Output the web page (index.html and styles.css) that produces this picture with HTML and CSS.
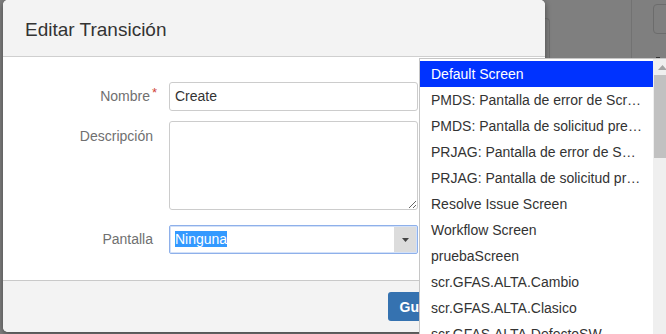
FILE: index.html
```html
<!DOCTYPE html>
<html lang="es">
<head>
<meta charset="utf-8">
<title>Editar Transición</title>
<link rel="stylesheet" href="styles.css">
</head>
<body>
<div class="bgpage">
  <div class="bg-panel"></div>
  <div class="bg-divider"></div>
  <div class="bg-btn"></div>
  <div class="bg-dash"></div>
</div>
<div class="page">
  <div class="modal">
    <div class="modal-header"><h2 class="title">Editar Transición</h2></div>
    <div class="modal-body">
      <div class="row row-name">
        <div class="label label-req"><span class="label-text">Nombre<span class="req">*</span></span></div>
        <div class="field text-field">Create</div>
      </div>
      <div class="row row-desc">
        <div class="label label-top">Descripción</div>
        <textarea class="field textarea"></textarea>
      </div>
      <div class="row row-screen">
        <div class="label">Pantalla</div>
        <div class="field select-field">
          <div class="select-value"><span class="sel-text">Ninguna</span></div>
          <div class="select-arrow">
            <svg width="7" height="4" viewBox="0 0 7 4"><path d="M0 0h7L3.5 4z" fill="#444"/></svg>
          </div>
        </div>
      </div>
    </div>
    <div class="modal-footer">
      <button class="btn-primary">Guardar</button>
    </div>
  </div>
</div>
<div class="dropdown">
  <ul class="options">
    <li class="opt selected">Default Screen</li>
    <li class="opt">PMDS: Pantalla de error de Scr…</li>
    <li class="opt">PMDS: Pantalla de solicitud pre…</li>
    <li class="opt">PRJAG: Pantalla de error de S…</li>
    <li class="opt">PRJAG: Pantalla de solicitud pr…</li>
    <li class="opt">Resolve Issue Screen</li>
    <li class="opt">Workflow Screen</li>
    <li class="opt">pruebaScreen</li>
    <li class="opt">scr.GFAS.ALTA.Cambio</li>
    <li class="opt">scr.GFAS.ALTA.Clasico</li>
    <li class="opt">scr.GFAS.ALTA.DefectoSW</li>
  </ul>
  <div class="scrollbar">
    <div class="sb-up"><svg width="9" height="5" viewBox="0 0 9 5"><path d="M0 5L4.5 0 9 5z" fill="#a3a3a3"/></svg></div>
    <div class="sb-thumb"></div>
  </div>
</div>
</body>
</html>
```
FILE: styles.css
```css
* { box-sizing: border-box; }
html, body { margin: 0; padding: 0; }
body {
  width: 666px;
  height: 334px;
  overflow: hidden;
  position: relative;
  background: #7f7f7f;
  font-family: "Liberation Sans", Arial, sans-serif;
  font-size: 14px;
  color: #333;
}

/* dimmed page behind the dialog */
.bgpage { position: absolute; inset: 0; }
.bg-panel {
  position: absolute; left: 480px; top: 18px; width: 70px; height: 60px;
  border-top: 1px solid #6f6f6f; border-right: 1px solid #6f6f6f;
  border-top-right-radius: 4px;
}
.bg-divider {
  position: absolute; left: 631px; top: 0; width: 1px; height: 60px;
  background: #727272;
}
.bg-btn {
  position: absolute; left: 653px; top: 4px; width: 24px; height: 30px;
  border: 1px solid #6c6c6c; border-radius: 4px;
}
.bg-dash {
  position: absolute; left: 656px; top: 57px; width: 4px; height: 1px; background: #333;
}

.page {
  position: relative;
  display: flex;
  padding-left: 3px;
}

.modal {
  width: 542px;
  height: 332px;
  background: #fff;
  border-radius: 5px;
  box-shadow: 0 2px 6px rgba(0,0,0,.45);
  display: flex;
  flex-direction: column;
  overflow: hidden;
}

.modal-header {
  height: 57px;
  background: #f3f3f3;
  border-bottom: 1px solid #cfcfcf;
  display: flex;
  align-items: center;
  padding: 4px 0 0 22px;
}
.title {
  margin: 0;
  font-size: 19px;
  font-weight: normal;
  color: #333;
}

.modal-body {
  height: 223px;
  padding-top: 25px;
  display: flex;
  flex-direction: column;
}
.row {
  display: grid;
  grid-template-columns: 150px 249px;
  column-gap: 16px;
}
.row-name { margin-bottom: 10px; }
.row-desc { margin-bottom: 15px; }

.label {
  text-align: right;
  color: #707070;
  line-height: 29px;
}
.label-req { padding-right: 3px; }
.label-text { position: relative; }
.req {
  position: absolute;
  left: 100%;
  top: -2px;
  margin-left: 2px;
  color: #d04437;
  font-size: 13px;
  line-height: 13px;
}
.label-top { padding-top: 1px; }

.field {
  border: 1px solid #cccccc;
  border-radius: 3px;
  background: #fff;
  height: 29px;
}
.text-field {
  padding-left: 5px;
  line-height: 27px;
  color: #333;
}
.textarea {
  height: 89px;
  width: 249px;
  margin: 0;
  padding: 4px 5px;
  font: inherit;
  resize: both;
  display: block;
}

.select-field {
  border-color: #8eb0ea;
  box-shadow: inset 0 0 0 1px #d3e1f8;
  display: flex;
  border-radius: 2px;
}
.select-value {
  flex: 1;
  padding-left: 5px;
  line-height: 27px;
  color: #333;
}
.sel-text { background: #3399ff; color: #fff; }
.select-arrow {
  width: 22px;
  margin: 1px 1px 1px 0;
  background: #dcdcdc;
  display: flex;
  align-items: center;
  justify-content: center;
}
.select-arrow svg { display: block; }

.modal-footer {
  height: 52px;
  background: #f3f3f3;
  border-top: 1px solid #c9c9c9;
  display: flex;
  justify-content: flex-end;
  align-items: flex-start;
  padding: 11px 79px 0 0;
}
.btn-primary {
  height: 29px;
  padding: 0 12px;
  border: 0;
  border-radius: 3px;
  background: #3572b0;
  color: #fff;
  font: bold 14px "Liberation Sans", Arial, sans-serif;
}

/* open select list */
.dropdown {
  position: absolute;
  left: 419px;
  top: 58px;
  width: 262px;
  height: 290px;
  background: #fff;
  border: 1px solid #c6c6c6;
  display: flex;
}
.options {
  list-style: none;
  margin: 0;
  padding: 2px 0 0 0;
  width: 233px;
}
.opt {
  height: 26px;
  line-height: 26px;
  padding-left: 11px;
  white-space: nowrap;
  overflow: hidden;
  color: #333;
  font-size: 14px;
}
.opt.selected {
  background: #0033ff;
  color: #fff;
}
.scrollbar {
  width: 17px;
  background: #efefef;
  display: flex;
  flex-direction: column;
  padding-left: 1px;
}
.sb-up {
  height: 16px;
  display: flex;
  align-items: center;
  justify-content: center;
  padding-top: 1px;
}
.sb-up svg { display: block; }
.sb-thumb {
  height: 83px;
  background: #c1c1c1;
}
```
